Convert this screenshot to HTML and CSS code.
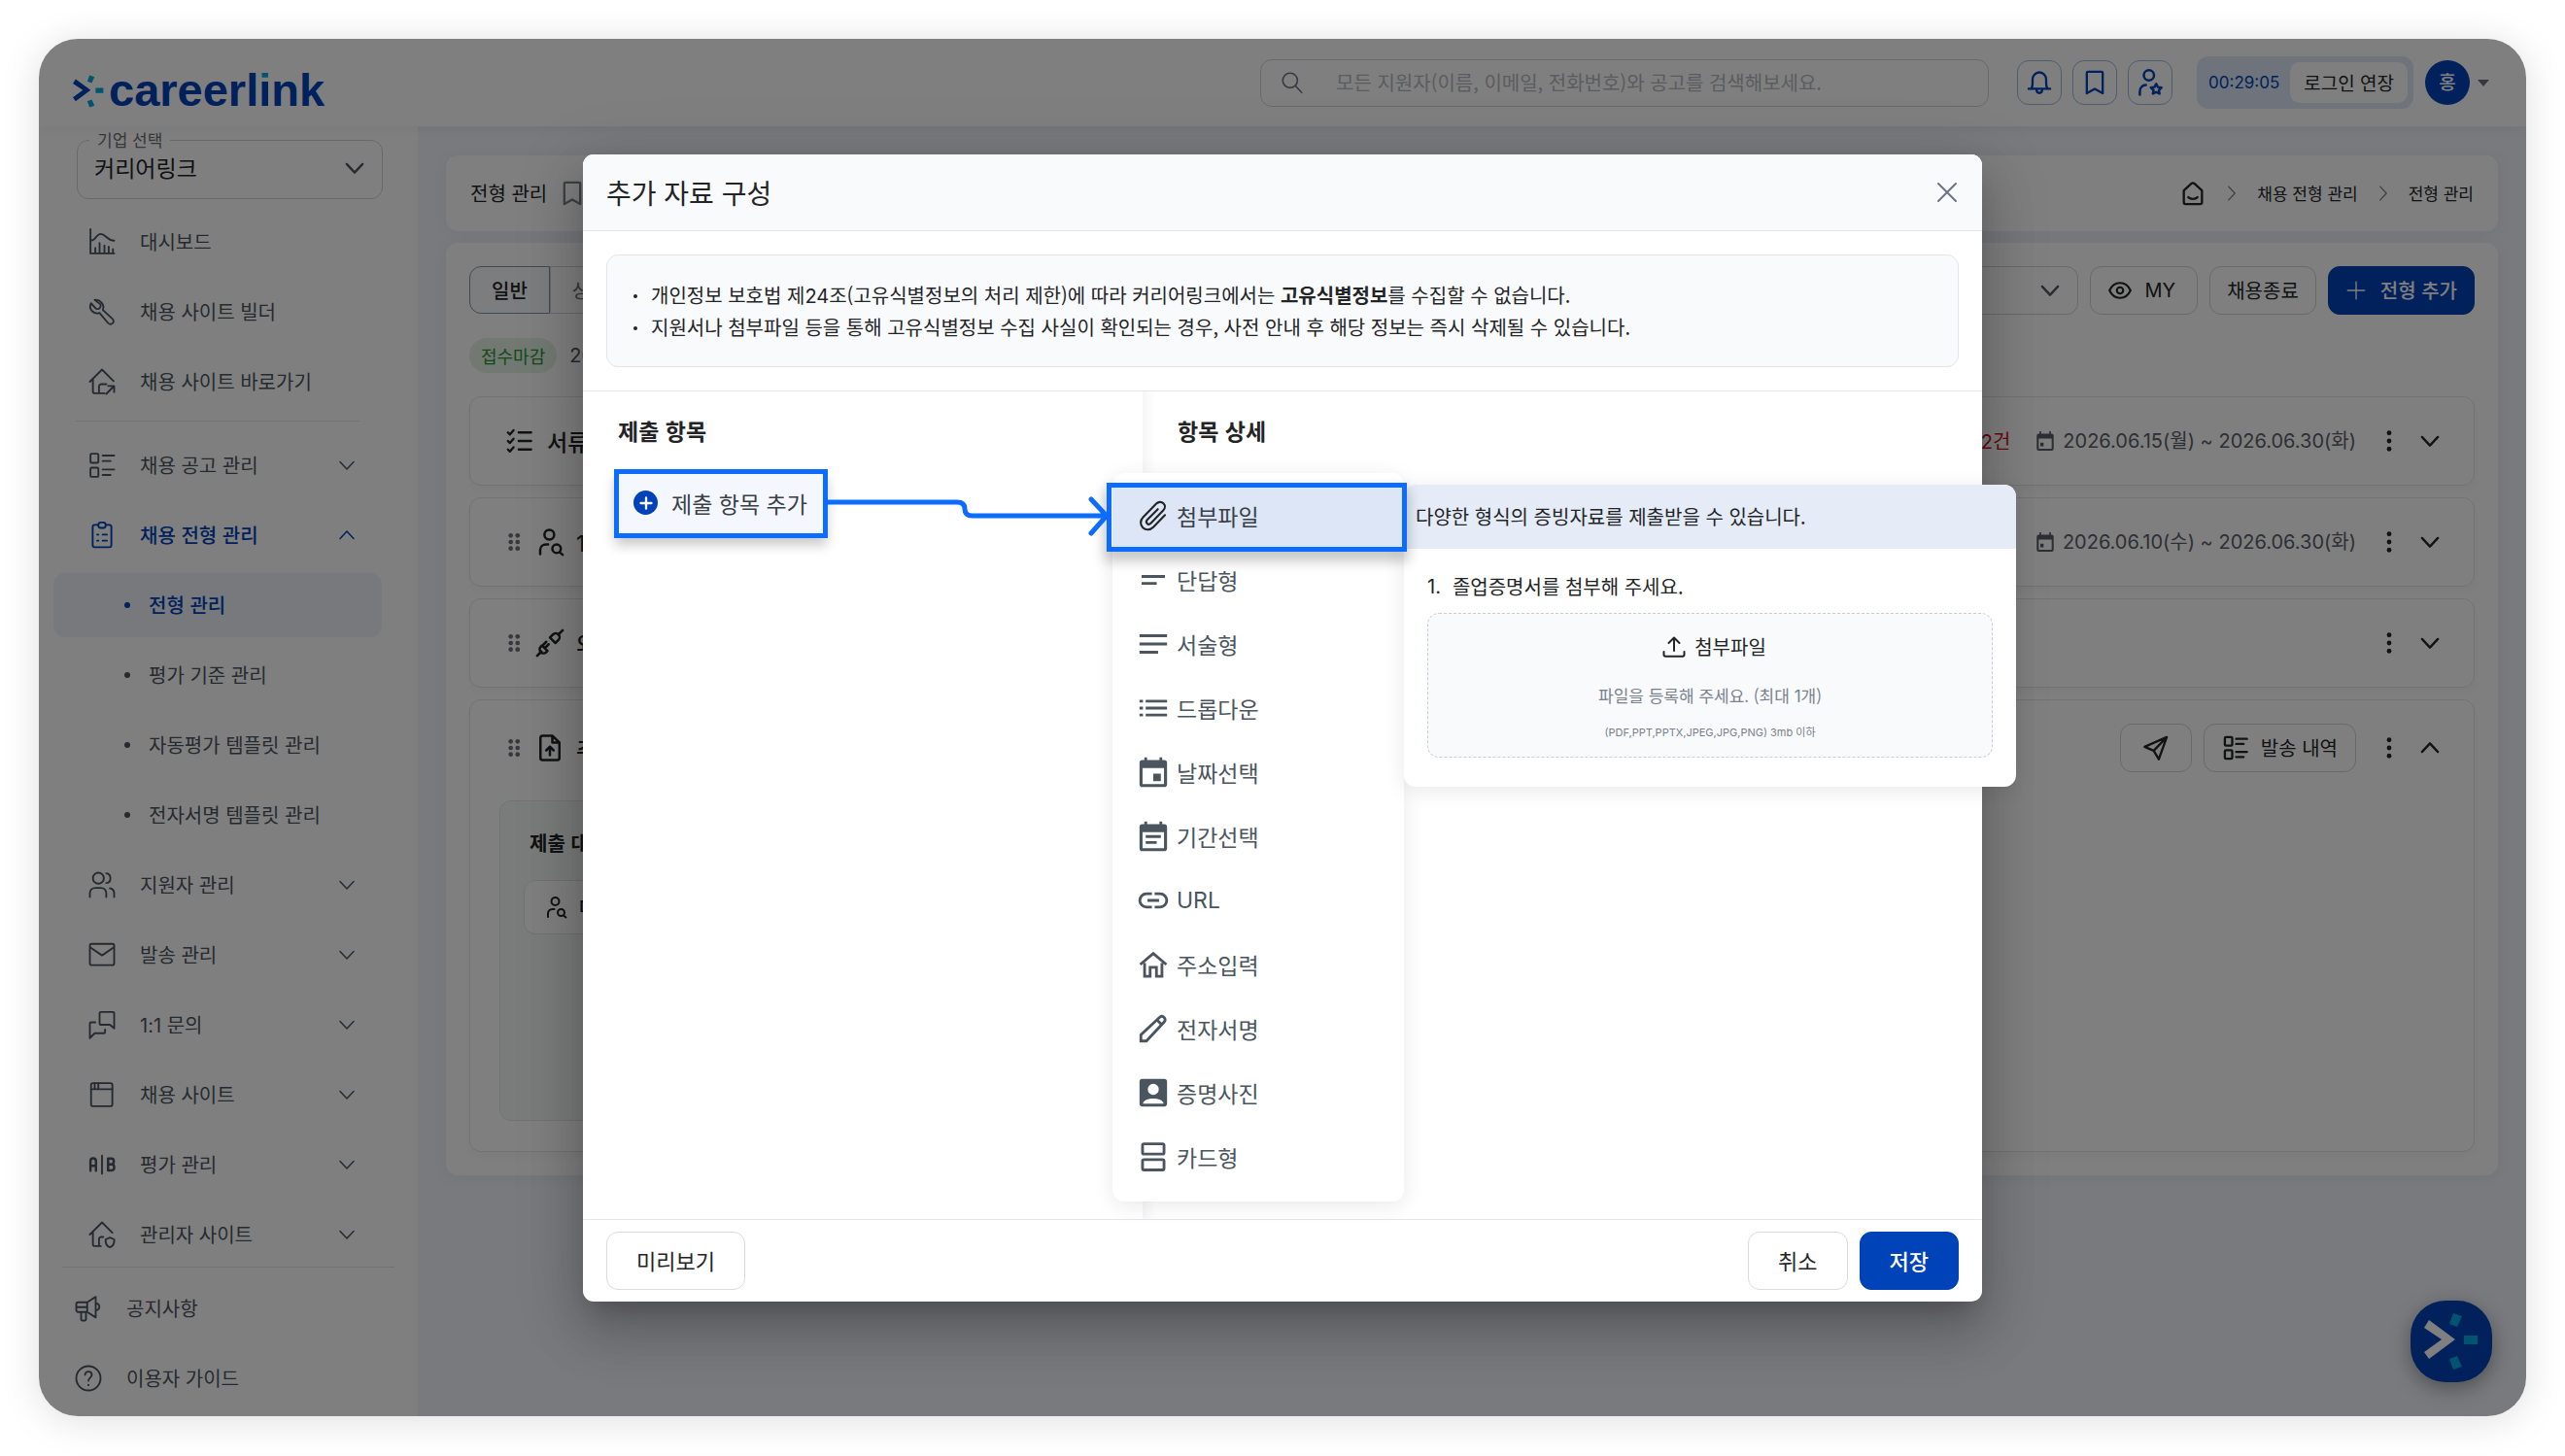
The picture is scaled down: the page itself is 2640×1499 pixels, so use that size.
FILE: index.html
```html
<!DOCTYPE html>
<html lang="ko">
<head>
<meta charset="utf-8">
<meta name="viewport" content="width=device-width, initial-scale=1">
<title>추가 자료 구성 - careerlink</title>
<link rel="stylesheet" href="styles.css">
</head>
<body>
<svg class="sprite" aria-hidden="true">
  <symbol id="mark" viewBox="0 0 56 58">
    <path class="mark-main" d="M5 7 32 27 5 47 0 40 18 27 0 15z"/>
    <path class="mark-dot" d="M30 0l9 3-5 11-8-3zM41 23h14v9H41zM26 47l8-3 5 11-9 3z"/>
  </symbol>
  <symbol id="i-down" viewBox="0 0 24 24"><path d="m5 8.500 7 7.500 7-7.500"/></symbol>
  <symbol id="i-up" viewBox="0 0 24 24"><path d="m5 15.500 7-7.500 7 7.500"/></symbol>
  <symbol id="i-right" viewBox="0 0 24 24"><path d="m8.500 4.500 7 7.500-7 7.500"/></symbol>
  <symbol id="i-search" viewBox="0 0 24 24"><circle cx="10" cy="10" r="7"/><path d="m15 15 6 6.500"/></symbol>
  <symbol id="i-bell" viewBox="0 0 24 24"><path d="M2.500 17.500h19M5 17.500c.8-1.500 1-3 1-5V9.500C6 5.800 8.500 3 12 3s6 2.800 6 6.500v3c0 2 .2 3.500 1 5M9.500 18c0 2 1 3.200 2.500 3.200s2.500-1.200 2.500-3.200"/></symbol>
  <symbol id="i-bookmark" viewBox="0 0 24 24"><path d="M5 3.500c0-.6.4-1 1-1h12c.6 0 1 .4 1 1v18l-7-4-7 4z"/></symbol>
  <symbol id="i-userstar" viewBox="0 0 24 24"><circle cx="11" cy="6" r="4.200"/><path d="M3.500 22v-2.500c0-3 2-5.500 5-5.500M17 13l1.400 2.700 3 .4-2.200 2.100.5 3L17 19.800l-2.700 1.400.5-3-2.200-2.100 3-.4z"/></symbol>
  <symbol id="i-usersearch" viewBox="0 0 24 24"><circle cx="11.500" cy="6" r="4"/><path d="M4 22v-3.500C4 16 6 14 9 14h1.500M20 20.500l2.500 2"/><circle cx="17.500" cy="17.500" r="3.500"/></symbol>
  <symbol id="i-home" viewBox="0 0 24 24"><path d="M4 9.500 10.500 3.600a2.200 2.200 0 0 1 3 0L20 9.500V20a1.500 1.500 0 0 1-1.500 1.500h-13A1.500 1.500 0 0 1 4 20zM8 15.500c2 2 6 2 8 0"/></symbol>
  <symbol id="i-chart" viewBox="0 0 24 24"><path d="M2.500 1.500v20h19.500M6.500 21v-4M10 21v-8M14 21v-6M17.500 21v-5M21 21v-3M3 11c4 0 4-5.500 8-5.500S16 11 22 11"/></symbol>
  <symbol id="i-wrench" viewBox="0 0 24 24"><path d="M6 2.200l4.500 3.500c.8.800.3 2.800-.6 3.400-.8.700-2.400.8-3.200 0L3 5c-1.200 2.200-.8 4.800 1 6.600 1.600 1.600 3.900 2 5.900 1.300l7 8.300c1 1.200 2.700 1.300 3.800.3 1.100-1.100 1-2.800-.2-3.800L12.700 10.500c.8-2.200.4-4.500-1.200-6.200A6 6 0 0 0 6 2.200"/></symbol>
  <symbol id="i-homego" viewBox="0 0 24 24"><path d="m2 12 10-10 9.500 9.500M4.500 10v10c0 1 .7 1.500 1.500 1.500h4M9.500 21v-5c0-1.200.8-2 2-2h4M15.500 22l6-6M17 15.500h5v5M10 21.500h4"/></symbol>
  <symbol id="i-list2" viewBox="0 0 24 24"><rect x="2.500" y="2.500" width="6.500" height="7.500" rx="1"/><rect x="2.500" y="14" width="6.500" height="7.500" rx="1"/><path d="M12.500 4H22M12.500 8.500H19M12.500 15.500H22M12.500 20H19"/></symbol>
  <symbol id="i-clip" viewBox="0 0 24 24"><path d="M8.500 3.500H6c-1 0-1.700.7-1.700 1.700v15c0 1 .7 1.700 1.700 1.700h12c1 0 1.700-.7 1.700-1.700v-15c0-1-.7-1.700-1.700-1.700h-2.500"/><rect x="9" y="1.500" width="6" height="4.500" rx="2"/><path d="M8 11.500h1M12.500 11.500h3.500M8 16.500h1M12.500 16.500h3.500"/></symbol>
  <symbol id="i-users" viewBox="0 0 24 24"><circle cx="9" cy="6.500" r="4.500"/><path d="M2 22v-3c0-2.500 1.800-4.500 4.500-4.500H11c2.700 0 4.500 2 4.500 4.500v3M15.500 2.500c4.500.5 4.500 7.500 0 8M18.500 14.800c2.200.5 3.500 2 3.500 4.200v3"/></symbol>
  <symbol id="i-mail" viewBox="0 0 24 24"><rect x="2" y="3" width="20" height="17.500" rx="1.500"/><path d="m2.500 6 9.500 6.500L21.500 6"/></symbol>
  <symbol id="i-chat" viewBox="0 0 24 24"><path d="M11 1.500h10c.6 0 1 .4 1 1V15l-3.500-3H11c-.6 0-1-.4-1-1V2.500c0-.6.4-1 1-1zM6.500 10H3c-.6 0-1 .4-1 1v12l4-4h7.500c.6 0 1-.4 1-1v-2"/></symbol>
  <symbol id="i-window" viewBox="0 0 24 24"><rect x="3" y="2.500" width="17.500" height="19" rx="1.500"/><path d="M3 7.500h17.500M6 2.500v5M9 2.500v5"/></symbol>
  <symbol id="i-ab" viewBox="0 0 24 24"><path stroke-width="2" d="M2.500 17V9c0-1.500.8-2.200 2.200-2.200S7 7.500 7 9v8M2.500 13H7M17 7h2.700c2.700 0 2.700 4.700 0 4.700H17zM17 11.700h3c2.700 0 2.700 5 0 5h-3z"/><path d="M12 4.500v15"/></symbol>
  <symbol id="i-homeshield" viewBox="0 0 24 24"><path d="m2 12 10-10 8.500 8.500M4.500 10v10c0 1 .7 1.500 1.500 1.500h5M9.500 21v-5c0-1.200.8-2 2-2h1.500M15 16l3.500-1.500L22 16c.3 3-.8 5.500-3.500 6.500C15.800 21.500 14.700 19 15 16z"/></symbol>
  <symbol id="i-horn" viewBox="0 0 24 24"><path d="M3.500 7H11l7-4.500v17L11 15H3.500c-.8 0-1.500-.7-1.500-1.500v-5C2 7.700 2.700 7 3.500 7zM11 7v8M18 8c4-.5 4 6 0 5.500M6 15v6c0 1.500 4 1.500 4 0v-6M2 11h8"/></symbol>
  <symbol id="i-help" viewBox="0 0 24 24"><circle cx="12" cy="12" r="10"/><path d="M9.200 9.200c0-3.600 5.600-3.500 5.600 0 0 2.300-2.800 2.300-2.800 4.800M12 17.300v.4"/></symbol>
  <symbol id="i-eye" viewBox="0 0 24 24"><path d="M2 12c4.500-9.500 15.500-9.500 20 0-4.500 9.500-15.500 9.500-20 0z"/><circle cx="12" cy="12" r="3"/></symbol>
  <symbol id="i-plus" viewBox="0 0 24 24"><path d="M12 2.500v19M2.500 12h19"/></symbol>
  <symbol id="i-close" viewBox="0 0 24 24"><path d="m3 3 18 18M21 3 3 21"/></symbol>
  <symbol id="i-checks" viewBox="0 0 24 24"><path d="m1.500 4.500 1.800 1.800L6.500 2.500M1.500 12l1.800 1.800L6.500 10M1.500 19.500l1.800 1.800 3.200-3.800M11 4.500h11M11 12h11M11 19.500h11"/></symbol>
  <symbol id="i-plug" viewBox="0 0 24 24"><path d="m1.500 22.500 3.500-3.500M22.500 1.500 19 5M5.500 14l4.500 4.500-1 1c-1.300 1.300-3.200 1.300-4.500 0s-1.300-3.200 0-4.500zM12 7.500l4.500 4.500 2.500-2.500c1.300-1.300 1.300-3.200 0-4.500s-3.200-1.300-4.500 0zM8 16l3-3M6 14l3-3"/></symbol>
  <symbol id="i-fileup" viewBox="0 0 24 24"><path d="M14 2H6C5 2 4.200 2.800 4.200 3.800v16.400c0 1 .8 1.800 1.800 1.800h12c1 0 1.800-.8 1.800-1.800V7.500zM14 2v5.500h5.500M12 18v-6.500M9 14l3-3 3 3"/></symbol>
  <symbol id="i-send" viewBox="0 0 24 24"><path d="M21.500 2.500 2 11l8 3.500L14.500 22zM21.500 2.500 10 14.500"/></symbol>
  <symbol id="i-cal" viewBox="0 0 24 24"><path fill="currentColor" stroke="none" d="M5 0h2v3h10V0h2v3h1a2.500 2.500 0 0 1 2.500 2.500v16A2.500 2.500 0 0 1 20 24H4a2.500 2.500 0 0 1-2.500-2.500v-16A2.500 2.500 0 0 1 4 3h1zM4 9v12.500h16V9zm2 5h4v4.500H6z" fill-rule="evenodd"/></symbol>
  <symbol id="i-caldate" viewBox="0 0 24 24"><path fill="currentColor" stroke="none" fill-rule="evenodd" d="M5.500 1.200h2v2h9v-2h2v2H20A2 2 0 0 1 22 5.200v15.600a2 2 0 0 1-2 2H4a2 2 0 0 1-2-2V5.200a2 2 0 0 1 2-2h1.500zM4.200 9v11.600h15.600V9zM12 13h5.500v5.500H12z"/></symbol>
  <symbol id="i-calrange" viewBox="0 0 24 24"><path fill="currentColor" stroke="none" fill-rule="evenodd" d="M5.500 1.200h2v2h9v-2h2v2H20A2 2 0 0 1 22 5.200v15.600a2 2 0 0 1-2 2H4a2 2 0 0 1-2-2V5.200a2 2 0 0 1 2-2h1.500zM4.200 9v11.600h15.600V9zM6.500 11.200h11v2h-11zM6.500 15.500h8v2h-8z"/></symbol>
  <symbol id="i-attach" viewBox="0 0 24 24"><path d="M20.500 11.500 12 20.300c-2.200 2.200-5.500 2.400-7.600.3s-2-5.400.2-7.600L14.200 3.200c1.500-1.500 3.800-1.600 5.200-.2s1.300 3.700-.2 5.200l-9 9.200c-.9.900-2 .9-2.700.2-.7-.7-.7-1.800.2-2.700l7.600-7.700"/></symbol>
  <symbol id="i-short" viewBox="0 0 24 24"><path d="M3.500 9.500h17M3.500 14.500h11"/></symbol>
  <symbol id="i-long" viewBox="0 0 24 24"><path d="M2 6h20M2 12h20M2 18h13.500"/></symbol>
  <symbol id="i-drop" viewBox="0 0 24 24"><path d="M2 7h2.500M6.500 7H22M2 12h2.500M6.500 12H22M2 17h2.500M6.500 17H22"/></symbol>
  <symbol id="i-link" viewBox="0 0 24 24"><path d="M11 7.200H7a4.800 4.800 0 0 0 0 9.600h4M13 7.200h4a4.800 4.800 0 0 1 0 9.600h-4M7.800 12h8.400"/></symbol>
  <symbol id="i-house" viewBox="0 0 24 24"><path d="M2.500 12 12 4l9.500 8M5.700 11v9.500h4V14h4.600v6.500h4V11"/></symbol>
  <symbol id="i-pencil" viewBox="0 0 24 24"><path d="M3 21v-4.500L16.300 4c1.200-1.200 2.600-1.200 3.600-.2s1 2.400-.2 3.600L7 21zM14.500 5.500l4 4"/></symbol>
  <symbol id="i-photo" viewBox="0 0 24 24"><path fill="currentColor" stroke="none" fill-rule="evenodd" d="M4 2h16a2 2 0 0 1 2 2v16a2 2 0 0 1-2 2H4a2 2 0 0 1-2-2V4a2 2 0 0 1 2-2zm8 3.500a4 4 0 1 0 0 8 4 4 0 0 0 0-8zM4.500 20h15c-.5-5-14.500-5-15 0z"/></symbol>
  <symbol id="i-cards" viewBox="0 0 24 24"><rect x="4.200" y="2.500" width="15.600" height="7.500" rx="1"/><rect x="4.200" y="14" width="15.600" height="7.500" rx="1"/></symbol>
  <symbol id="i-upload" viewBox="0 0 24 24"><path d="M12 16V2.500M6.500 8 12 2.500 17.500 8M1.500 17v3c0 1 .7 1.700 1.700 1.700h17.600c1 0 1.700-.7 1.700-1.700v-3"/></symbol>
  <symbol id="i-more" viewBox="0 0 24 24"><g fill="currentColor" stroke="none"><circle cx="12" cy="3" r="2.600"/><circle cx="12" cy="12" r="2.600"/><circle cx="12" cy="21" r="2.600"/></g></symbol>
  <symbol id="i-grip" viewBox="0 0 24 24"><g fill="currentColor" stroke="none"><circle cx="8" cy="4" r="2.800"/><circle cx="16.500" cy="4" r="2.800"/><circle cx="8" cy="12" r="2.800"/><circle cx="16.500" cy="12" r="2.800"/><circle cx="8" cy="20" r="2.800"/><circle cx="16.500" cy="20" r="2.800"/></g></symbol>
</svg>

<div class="frame">
  <header class="topbar">
    <a class="logo" href="#"><svg class="logo-mark" aria-hidden="true"><use href="#mark"/></svg><span class="logo-word">careerl<span class="logo-i">i</span>nk</span></a>
    <div class="search">
      <svg class="icon icon-26" aria-hidden="true"><use href="#i-search"/></svg>
      <input type="search" aria-label="통합 검색" placeholder="모든 지원자(이름, 이메일, 전화번호)와 공고를 검색해보세요.">
    </div>
    <div class="quick">
      <button type="button" class="quick-btn" aria-label="알림"><svg class="icon icon-28"><use href="#i-bell"/></svg></button>
      <button type="button" class="quick-btn" aria-label="북마크"><svg class="icon icon-28"><use href="#i-bookmark"/></svg></button>
      <button type="button" class="quick-btn" aria-label="관심 지원자"><svg class="icon icon-30"><use href="#i-userstar"/></svg></button>
    </div>
    <div class="session"><span class="latin">00:29:05</span><button type="button">로그인 연장</button></div>
    <button type="button" class="account" aria-label="내 계정"><span class="avatar">홍</span><span class="caret"></span></button>
  </header>

  <div class="workspace">
    <aside class="sidebar">
      <fieldset class="company">
        <legend><label for="company">기업 선택</label></legend>
        <select id="company"><option>커리어링크</option></select>
        <svg class="icon icon-28" aria-hidden="true"><use href="#i-down"/></svg>
      </fieldset>
      <nav aria-label="주 메뉴">
        <ul class="nav">
          <li><a href="#"><svg class="icon icon-30"><use href="#i-chart"/></svg>대시보드</a></li>
          <li><a href="#"><svg class="icon icon-30"><use href="#i-wrench"/></svg>채용 사이트 빌더</a></li>
          <li><a href="#"><svg class="icon icon-30"><use href="#i-homego"/></svg>채용 사이트 바로가기</a></li>
        </ul>
        <hr class="nav-rule">
        <ul class="nav">
          <li><a href="#"><svg class="icon icon-30"><use href="#i-list2"/></svg>채용 공고 관리<svg class="icon icon-24 arrow"><use href="#i-down"/></svg></a></li>
          <li><a href="#" class="open"><svg class="icon icon-30"><use href="#i-clip"/></svg>채용 전형 관리<svg class="icon icon-24 arrow"><use href="#i-up"/></svg></a></li>
          <li><a href="#" class="sub current" aria-current="page">전형 관리</a></li>
          <li><a href="#" class="sub">평가 기준 관리</a></li>
          <li><a href="#" class="sub">자동평가 템플릿 관리</a></li>
          <li><a href="#" class="sub">전자서명 템플릿 관리</a></li>
          <li><a href="#"><svg class="icon icon-30"><use href="#i-users"/></svg>지원자 관리<svg class="icon icon-24 arrow"><use href="#i-down"/></svg></a></li>
          <li><a href="#"><svg class="icon icon-30"><use href="#i-mail"/></svg>발송 관리<svg class="icon icon-24 arrow"><use href="#i-down"/></svg></a></li>
          <li><a href="#"><svg class="icon icon-30"><use href="#i-chat"/></svg><span><span class="latin">1:1</span> 문의</span><svg class="icon icon-24 arrow"><use href="#i-down"/></svg></a></li>
          <li><a href="#"><svg class="icon icon-30"><use href="#i-window"/></svg>채용 사이트<svg class="icon icon-24 arrow"><use href="#i-down"/></svg></a></li>
          <li><a href="#"><svg class="icon icon-30"><use href="#i-ab"/></svg>평가 관리<svg class="icon icon-24 arrow"><use href="#i-down"/></svg></a></li>
          <li><a href="#"><svg class="icon icon-30"><use href="#i-homeshield"/></svg>관리자 사이트<svg class="icon icon-24 arrow"><use href="#i-down"/></svg></a></li>
        </ul>
      </nav>
      <ul class="nav nav-foot">
        <li><a href="#"><svg class="icon icon-30"><use href="#i-horn"/></svg>공지사항</a></li>
        <li><a href="#"><svg class="icon icon-30"><use href="#i-help"/></svg>이용자 가이드</a></li>
      </ul>
    </aside>

    <main class="content">
      <section class="card page-head">
        <h1>전형 관리</h1>
        <svg class="icon icon-28 bold muted"><use href="#i-bookmark"/></svg>
        <nav class="crumbs" aria-label="현재 위치">
          <a href="#" aria-label="홈"><svg class="icon icon-28"><use href="#i-home"/></svg></a>
          <svg class="icon icon-22 muted"><use href="#i-right"/></svg>
          <a href="#">채용 전형 관리</a>
          <svg class="icon icon-22 muted"><use href="#i-right"/></svg>
          <a href="#">전형 관리</a>
        </nav>
      </section>

      <section class="card board">
        <div class="toolbar">
          <div class="tabs"><button type="button" class="on">일반</button><button type="button">상세</button></div>
          <div class="tools">
            <div class="sort"><select aria-label="정렬"><option>최신순</option></select><svg class="icon icon-28" aria-hidden="true"><use href="#i-down"/></svg></div>
            <button type="button" class="btn eye"><svg class="icon icon-26 bold"><use href="#i-eye"/></svg><span class="latin">MY</span></button>
            <button type="button" class="btn">채용종료</button>
            <button type="button" class="btn primary"><svg class="icon icon-22"><use href="#i-plus"/></svg>전형 추가</button>
          </div>
        </div>
        <div class="status"><span class="badge">접수마감</span><span class="latin">2026</span></div>
        <ul class="stages">
          <li class="stage">
            <div class="stage-row">
              <svg class="icon icon-28 bold"><use href="#i-checks"/></svg>
              <h2>서류</h2>
              <span class="alert"><span class="latin">2</span>건</span>
              <span class="date"><svg class="icon icon-20"><use href="#i-cal"/></svg><span class="latin">2026.06.15(월) ~ 2026.06.30(화)</span></span>
              <button type="button" class="bare" aria-label="더보기"><svg class="icon icon-22"><use href="#i-more"/></svg></button>
              <button type="button" class="bare" aria-label="펼치기"><svg class="icon icon-28 bold"><use href="#i-down"/></svg></button>
            </div>
          </li>
          <li class="stage">
            <div class="stage-row draggable">
              <svg class="icon icon-20 grip"><use href="#i-grip"/></svg>
              <svg class="icon icon-30 bold"><use href="#i-usersearch"/></svg>
              <h2><span class="latin">1</span>차</h2>
              <span class="date"><svg class="icon icon-20"><use href="#i-cal"/></svg><span class="latin">2026.06.10(수) ~ 2026.06.30(화)</span></span>
              <button type="button" class="bare" aria-label="더보기"><svg class="icon icon-22"><use href="#i-more"/></svg></button>
              <button type="button" class="bare" aria-label="펼치기"><svg class="icon icon-28 bold"><use href="#i-down"/></svg></button>
            </div>
          </li>
          <li class="stage">
            <div class="stage-row draggable">
              <svg class="icon icon-20 grip"><use href="#i-grip"/></svg>
              <svg class="icon icon-30 bold"><use href="#i-plug"/></svg>
              <h2>외부</h2>
              <button type="button" class="bare" aria-label="더보기"><svg class="icon icon-22"><use href="#i-more"/></svg></button>
              <button type="button" class="bare" aria-label="펼치기"><svg class="icon icon-28 bold"><use href="#i-down"/></svg></button>
            </div>
          </li>
          <li class="stage expanded">
            <div class="stage-row draggable">
              <svg class="icon icon-20 grip"><use href="#i-grip"/></svg>
              <svg class="icon icon-30 bold"><use href="#i-fileup"/></svg>
              <h2>추가</h2>
              <div class="actions">
                <button type="button" class="btn wide" aria-label="발송"><svg class="icon icon-28 bold"><use href="#i-send"/></svg></button>
                <button type="button" class="btn"><svg class="icon icon-28 bold"><use href="#i-list2"/></svg>발송 내역</button>
              </div>
              <button type="button" class="bare" aria-label="더보기"><svg class="icon icon-22"><use href="#i-more"/></svg></button>
              <button type="button" class="bare" aria-label="접기"><svg class="icon icon-28 bold"><use href="#i-up"/></svg></button>
            </div>
            <div class="targets">
              <h3>제출 대상</h3>
              <button type="button" class="btn"><svg class="icon icon-24 bold"><use href="#i-usersearch"/></svg>대상자</button>
            </div>
          </li>
        </ul>
      </section>
    </main>
  </div>

  <button type="button" class="helper" aria-label="도움말"><svg><use href="#mark"/></svg></button>

  <div class="scrim">
    <section class="modal" role="dialog" aria-modal="true" aria-labelledby="modal-title">
      <header class="modal-head">
        <h2 id="modal-title">추가 자료 구성</h2>
        <button type="button" class="bare" aria-label="닫기"><svg class="icon icon-24"><use href="#i-close"/></svg></button>
      </header>
      <div class="notice">
        <ul>
          <li>개인정보 보호법 제<span class="latin">24</span>조(고유식별정보의 처리 제한)에 따라 커리어링크에서는 <strong>고유식별정보</strong>를 수집할 수 없습니다.</li>
          <li>지원서나 첨부파일 등을 통해 고유식별정보 수집 사실이 확인되는 경우, 사전 안내 후 해당 정보는 즉시 삭제될 수 있습니다.</li>
        </ul>
      </div>
      <div class="panes">
        <div class="pane pane-left">
          <h3>제출 항목</h3>
          <button type="button" class="add"><span class="add-dot"><svg class="icon"><use href="#i-plus"/></svg></span>제출 항목 추가</button>
        </div>
        <div class="pane pane-right">
          <h3>항목 상세</h3>
          <div class="picker">
            <ul class="picker-list">
              <li><button type="button" class="picked"><svg class="icon icon-34"><use href="#i-attach"/></svg>첨부파일</button></li>
              <li><button type="button"><svg class="icon icon-34 heavy"><use href="#i-short"/></svg>단답형</button></li>
              <li><button type="button"><svg class="icon icon-34 heavy"><use href="#i-long"/></svg>서술형</button></li>
              <li><button type="button"><svg class="icon icon-34 heavy"><use href="#i-drop"/></svg>드롭다운</button></li>
              <li><button type="button"><svg class="icon icon-34 heavy"><use href="#i-caldate"/></svg>날짜선택</button></li>
              <li><button type="button"><svg class="icon icon-34 heavy"><use href="#i-calrange"/></svg>기간선택</button></li>
              <li><button type="button"><svg class="icon icon-34 heavy"><use href="#i-link"/></svg><span class="latin">URL</span></button></li>
              <li><button type="button"><svg class="icon icon-34 heavy"><use href="#i-house"/></svg>주소입력</button></li>
              <li><button type="button"><svg class="icon icon-34 heavy"><use href="#i-pencil"/></svg>전자서명</button></li>
              <li><button type="button"><svg class="icon icon-34 heavy"><use href="#i-photo"/></svg>증명사진</button></li>
              <li><button type="button"><svg class="icon icon-34 heavy"><use href="#i-cards"/></svg>카드형</button></li>
            </ul>
            <div class="preview">
              <p class="preview-head">다양한 형식의 증빙자료를 제출받을 수 있습니다.</p>
              <div class="preview-body">
                <p class="question"><span class="latin">1.</span><span>졸업증명서를 첨부해 주세요.</span></p>
                <div class="dropzone">
                  <p class="drop-title"><svg class="icon icon-24 bold"><use href="#i-upload"/></svg>첨부파일</p>
                  <p class="drop-hint">파일을 등록해 주세요. (최대 <span class="latin">1</span>개)</p>
                  <p class="drop-types"><span class="latin">(PDF,PPT,PPTX,JPEG,JPG,PNG) 3mb 이하</span></p>
                </div>
              </div>
            </div>
          </div>
        </div>
        <svg class="connector" viewBox="0 0 296 56" aria-hidden="true"><path d="M0 13H136Q144 13 144 20T152 27H288M274 10l16 17-16 18"/></svg>
      </div>
      <footer class="modal-foot">
        <button type="button" class="btn-lg">미리보기</button>
        <button type="button" class="btn-lg cancel">취소</button>
        <button type="button" class="btn-lg save">저장</button>
      </footer>
    </section>
  </div>
</div>
</body>
</html>
```

FILE: styles.css
```css
:root {
  --brand: #0042b8;
  --cyan: #00a8e0;
  --mark: #0b6cff;
  --ink: #222426;
  --text: #4b5560;
  --line: #e3e5ea;
  --canvas: #f2f4fb;
  --tint: #f9fafc;
}

* { box-sizing: border-box; }

body {
  margin: 0;
  background: #fff;
  color: var(--ink);
  font: 20px/30px "Noto Sans CJK KR", "Noto Sans", sans-serif;
}

h1, h2, h3, p, ul { margin: 0; padding: 0; }
ul { list-style: none; }
a { color: inherit; text-decoration: none; }
button, input, select { font: inherit; color: inherit; margin: 0; }
button { cursor: pointer; padding: 0; background: none; border: 0; }

.latin { font-family: Inter, "Noto Sans CJK KR", sans-serif; line-height: 1; }
.sprite { position: absolute; width: 0; height: 0; }

.icon {
  flex: none;
  fill: none;
  stroke: currentColor;
  stroke-width: 1.5;
  stroke-linecap: round;
  stroke-linejoin: round;
}
.icon-20 { width: 20px; height: 20px; }
.icon-22 { width: 22px; height: 22px; }
.icon-24 { width: 24px; height: 24px; }
.icon-26 { width: 26px; height: 26px; }
.icon-28 { width: 28px; height: 28px; }
.icon-30 { width: 30px; height: 30px; }
.icon-34 { width: 34px; height: 34px; }
.bold { stroke-width: 2; }
.heavy { stroke-width: 2; stroke-linecap: butt; stroke-linejoin: miter; }
.muted { color: #7d828c; }
.bare { display: flex; }

.frame {
  position: relative;
  display: flex;
  flex-direction: column;
  height: calc(100vh - 81px);
  margin: 40px 40px 41px;
  border-radius: 40px;
  overflow: hidden;
}
body::before {
  content: "";
  position: absolute;
  z-index: -1;
  inset: 40px 40px 41px;
  border-radius: 40px;
  box-shadow: 0 4px 40px rgba(0, 0, 0, .13);
}

/* top bar */
.topbar {
  position: relative;
  z-index: 1;
  display: flex;
  align-items: center;
  flex: none;
  height: 90px;
  padding: 0 38px 0 35px;
  background: #fff;
  box-shadow: 0 2px 12px rgba(30, 40, 80, .06);
}
.logo { display: flex; align-items: center; gap: 5px; margin-top: 18px; --m: var(--brand); }
.logo-mark { width: 32px; height: 34px; }
.mark-main { fill: var(--m); }
.mark-dot { fill: var(--cyan); }
.logo-word { font: bold 47px/48px "Liberation Sans", Arial, sans-serif; color: var(--brand); margin-top: -3px; }
.logo-i {
  color: transparent;
  background: linear-gradient(var(--cyan) 34%, var(--brand) 34%);
  background-clip: text;
  -webkit-background-clip: text;
}
.search {
  display: flex;
  align-items: center;
  gap: 32px;
  width: 750px;
  height: 49px;
  margin: 0 29px 0 auto;
  padding: 0 19px;
  border: 1px solid #cfd2d8;
  border-radius: 12px;
  color: #6c7484;
}
.search input { flex: 1; min-width: 0; padding: 0; border: 0; outline: 0; background: none; }
.search input::placeholder { color: #b5b9c0; opacity: 1; }
.quick { display: flex; gap: 11px; }
.quick-btn {
  display: flex;
  align-items: center;
  justify-content: center;
  width: 46px;
  height: 46px;
  border: 1px solid #9db6e4;
  border-radius: 12px;
  color: var(--brand);
}
.quick-btn .icon { stroke-width: 2; }
.session {
  display: flex;
  align-items: center;
  gap: 11px;
  margin: 0 12px 0 25px;
  padding: 6px 6px 6px 12px;
  border-radius: 12px;
  background: #dfe6f6;
  color: var(--brand);
  font-size: 17px;
}
.session button {
  height: 42px;
  padding: 0 14px;
  border-radius: 10px;
  background: #fff;
  color: var(--ink);
  font-size: 19px;
}
.account { display: flex; align-items: center; gap: 8px; }
.avatar {
  width: 46px;
  height: 46px;
  border-radius: 50%;
  background: var(--brand);
  color: #fff;
  font-size: 19px;
  font-weight: 500;
  line-height: 44px;
}
.caret { border: 6px solid transparent; border-top: 7px solid #6c7078; border-bottom: 0; }

/* sidebar */
.workspace { display: flex; flex: 1; min-height: 0; }
.sidebar { flex: none; width: 390px; padding-top: 6px; background: #fff; color: var(--text); }
.company {
  position: relative;
  height: 69px;
  margin: 0 36px 11px 39px;
  padding: 0 0 0 9px;
  border: 1px solid #cfd2d8;
  border-radius: 12px;
  color: var(--ink);
}
.company legend {
  margin-left: 3px;
  padding: 0 8px;
  color: #6c7078;
  font-size: 17px;
  line-height: 16px;
}
.company select {
  display: block;
  width: 100%;
  height: 40px;
  padding: 0 8px;
  border: 0;
  outline: 0;
  appearance: none;
  background: none;
  font-size: 23px;
}
.company .icon { position: absolute; right: 14px; top: 7px; color: #505560; stroke-width: 2; pointer-events: none; }
.nav { display: flex; flex-direction: column; gap: 6px; padding: 0 37px 0 15px; }
.nav a {
  display: flex;
  align-items: center;
  gap: 24px;
  height: 66px;
  padding: 0 24px 0 35px;
  border-radius: 12px;
}
.nav .arrow { margin-left: auto; }
.nav .open { color: var(--brand); font-weight: 500; }
.nav .sub { gap: 19px; padding-left: 73px; }
.nav .sub::before { content: ""; width: 6px; height: 6px; border-radius: 50%; background: currentColor; }
.nav .current { background: #eff2fa; color: var(--brand); font-weight: 500; }
.nav-rule { height: 1px; margin: 7px 60px 12px 38px; border: 0; background: var(--line); }
.nav-foot { margin: 0 24px; padding: 9px 0 0; border-top: 1px solid var(--line); }
.nav-foot a { padding-left: 12px; }

/* page behind the dialog */
.content { flex: 1; min-width: 0; padding: 30px 29px; background: var(--canvas); }
.card { border-radius: 12px; background: #fff; box-shadow: 0 2px 16px rgba(30, 40, 80, .05); }
.page-head { display: flex; align-items: center; gap: 12px; height: 78px; padding: 0 25px; margin-bottom: 12px; }
.page-head h1 { font-size: 20px; font-weight: 400; }
.crumbs { display: flex; align-items: center; gap: 15px; margin-left: auto; font-size: 17px; }
.crumbs a { display: flex; }
.crumbs .icon-28 { stroke-width: 2; }
.board { padding: 24px; }
.toolbar { display: flex; justify-content: space-between; }
.tabs { display: flex; }
.tabs button { height: 49px; padding: 0 22px; border: 1px solid #cfd2d8; border-radius: 0 12px 12px 0; color: #6c7078; }
.tabs .on { border-color: #8b909a; border-radius: 12px 0 0 12px; background: var(--tint); color: var(--ink); font-weight: 500; }
.tools { display: flex; gap: 12px; }
.sort { position: relative; }
.sort select { width: 220px; height: 50px; padding: 0 16px; border: 1px solid #cfd2d8; border-radius: 12px; appearance: none; background: #fff; }
.sort .icon { position: absolute; right: 15px; top: 11px; color: #505560; stroke-width: 2; }
.btn {
  display: flex;
  align-items: center;
  justify-content: center;
  gap: 14px;
  height: 50px;
  padding: 0 18px;
  border: 1px solid #cfd2d8;
  border-radius: 12px;
  background: #fff;
}
.tools .btn { padding: 0 17px; }
.tools .eye { gap: 13px; padding-right: 22px; }
.btn.primary { border-color: var(--brand); background: var(--brand); color: #fff; font-weight: 500; }
.btn.wide { width: 74px; padding: 0; }
.status { display: flex; align-items: center; gap: 13px; margin: 24px 0; color: #505560; }
.badge { padding: 3px 12px; border-radius: 18px; background: #e4f3e5; color: #2a9134; font-size: 18px; }
.stages { display: flex; flex-direction: column; gap: 12px; }
.stage { border: 1px solid var(--line); border-radius: 12px; background: #fff; box-shadow: 0 4px 10px rgba(30, 40, 80, .04); }
.stage-row { display: flex; align-items: center; gap: 14px; height: 90px; padding: 0 31px 0 37px; }
.stage-row.draggable { gap: 12px; padding-left: 35px; }
.stage-row h2 { margin-right: auto; font-size: 23px; font-weight: 500; }
.grip { color: #6c7078; }
.alert { margin-right: 12px; color: #d01020; }
.date { display: flex; align-items: center; gap: 8px; color: #5a5f6a; }
.stage-row .bare { width: 28px; justify-content: center; margin-left: 6px; }
.stage-row .bare:last-child { margin-left: 0; }
.draggable .bare { margin-left: 8px; }
.draggable .bare:last-child { margin-left: 2px; }
.actions { display: flex; gap: 12px; }
.actions .btn { gap: 12px; }
.expanded .stage-row { height: 98px; }
.targets {
  width: 900px;
  height: 330px;
  margin: 5px 0 31px 30px;
  padding: 28px 24px;
  border: 1px solid var(--line);
  border-radius: 12px;
  background: #f5f9f7;
}
.targets h3 { margin: 0 6px 23px; font-size: 20px; font-weight: 700; }
.targets .btn { gap: 12px; height: 56px; padding: 0 20px; border-color: var(--line); font-weight: 500; }

.helper {
  --m: #fff;
  position: absolute;
  right: 35px;
  bottom: 35px;
  display: flex;
  align-items: center;
  justify-content: center;
  width: 84px;
  height: 84px;
  border-radius: 36px;
  background: var(--brand);
  box-shadow: 0 6px 20px rgba(0, 0, 0, .35);
}
.helper svg { width: 56px; height: 58px; }

/* dialog */
.scrim {
  position: absolute;
  inset: 0;
  z-index: 2;
  display: flex;
  justify-content: center;
  padding: 119px 24px 118px;
  background: rgba(0, 0, 0, .5);
}
.modal {
  display: flex;
  flex-direction: column;
  flex: 0 1 1440px;
  border-radius: 11px;
  background: #fff;
  box-shadow: 0 16px 22px -10px rgba(0, 0, 0, .2), 0 34px 54px 4px rgba(0, 0, 0, .14), 0 13px 66px 11px rgba(0, 0, 0, .12);
}
.modal-head {
  display: flex;
  align-items: center;
  justify-content: space-between;
  height: 79px;
  padding: 0 24px;
  border-bottom: 1px solid var(--line);
  border-radius: 11px 11px 0 0;
  background: var(--tint);
}
.modal-head h2 { font-size: 28px; font-weight: 400; line-height: 40px; }
.modal-head .icon { color: #6c7484; stroke-width: 2; }
.notice { margin: 24px; padding: 24px 27px; border: 1px solid var(--line); border-radius: 12px; background: var(--tint); }
.notice li { position: relative; padding-left: 18px; line-height: 33px; }
.notice li::before { content: ""; position: absolute; left: 0; top: 16px; width: 4px; height: 4px; border-radius: 50%; background: currentColor; }
.notice strong { font-weight: 700; line-height: 1; }
.panes { position: relative; display: flex; flex: 1; border-top: 1px solid var(--line); }
.pane { padding: 23px 36px; }
.pane h3 { font-size: 23px; font-weight: 700; line-height: 34px; }
.pane-left { flex: 0 0 40%; }
.pane-right { position: relative; flex: 1; background: linear-gradient(90deg, #f6f6f7, #fff 14px); }
.add {
  display: flex;
  align-items: center;
  gap: 14px;
  height: 63px;
  margin-top: 27px;
  padding: 0 17px 2px 16px;
  outline: 5px solid var(--mark);
  outline-offset: -1px;
  background: #f4f7fe;
  box-shadow: 0 8px 12px 3px rgba(0, 0, 0, .22);
  color: #3a3f46;
  font-size: 23px;
}
.add-dot { display: flex; align-items: center; justify-content: center; width: 25px; height: 25px; border-radius: 50%; background: var(--brand); color: #fff; }
.add-dot .icon { width: 14px; height: 14px; stroke-width: 4; }
.connector { position: absolute; z-index: 3; left: 249px; top: 101px; width: 296px; height: 56px; fill: none; stroke: var(--mark); stroke-width: 5; stroke-linecap: round; }

.picker {
  position: absolute;
  left: -31px;
  top: 84px;
  width: 300px;
  padding: 12px 0;
  border-radius: 12px;
  background: #fff;
  box-shadow: 0 4px 22px rgba(0, 0, 0, .09);
}
.picker-list button {
  position: relative;
  display: flex;
  align-items: center;
  gap: 7px;
  width: 100%;
  height: 66px;
  padding: 0 0 2px 25px;
  color: var(--text);
  font-size: 23px;
}
.picker-list .picked { z-index: 1; background: #dde6f7; color: #3a3f46; }
.picked .icon { color: var(--ink); }
.picker-list .picked::after {
  content: "";
  position: absolute;
  inset: -2px -3px -3px -6px;
  border: 5px solid var(--mark);
  box-shadow: 0 8px 12px 2px rgba(0, 0, 0, .22);
}
.preview {
  position: absolute;
  left: 100%;
  top: 12px;
  width: 630px;
  border-radius: 12px;
  background: #fff;
  box-shadow: 0 4px 22px rgba(0, 0, 0, .09);
}
.preview-head { padding: 18px 12px; border-radius: 12px 12px 0 0; background: #e5ebf7; }
.preview-body { padding: 24px 24px 30px; }
.question { display: flex; align-items: center; gap: 12px; margin-bottom: 12px; }
.dropzone { padding: 19px 0 14px; border: 1px dashed #c9ced6; border-radius: 12px; background: #f8fafc; text-align: center; }
.drop-title { display: flex; align-items: center; justify-content: center; gap: 9px; padding-left: 9px; }
.drop-hint { margin-top: 21px; color: #7a818d; font-size: 17px; line-height: 28px; }
.drop-types { margin-top: 11px; color: #7a818d; font-size: 11px; line-height: 24px; }

.modal-foot { display: flex; gap: 12px; padding: 12px 24px; border-top: 1px solid var(--line); }
.btn-lg { height: 60px; padding: 0 30px 2px; border: 1px solid #d9dbe0; border-radius: 12px; background: #fff; font-size: 22px; }
.cancel { margin-left: auto; }
.save { border-color: var(--brand); background: var(--brand); color: #fff; font-weight: 500; }
```
